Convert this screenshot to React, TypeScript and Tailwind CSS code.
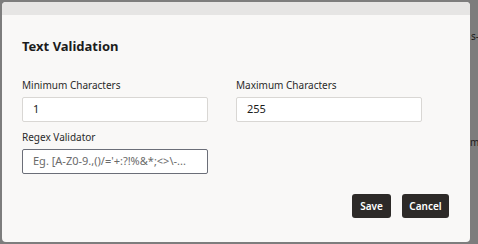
import React from "react";

export default function App() {
  return (
    <div
      className="relative w-[478px] h-[244px] bg-[#7d7d7d] pl-[2px] pt-[2px] overflow-hidden"
      style={{ fontFamily: '"Noto Sans", "Open Sans", sans-serif' }}
    >
      <div className="absolute left-[471px] top-[29px] text-[10px] text-[#1a1a1a]">s-</div>
      <div className="absolute left-[470px] top-[135px] text-[10px] text-[#1a1a1a] whitespace-nowrap">mp</div>
      <div className="relative w-[468px] h-[240px] bg-[#f9f8f7] rounded-[4px] flex flex-col overflow-hidden">
        <div className="h-[13px] bg-[#e6e5e4] shrink-0" />
        <div className="flex flex-col px-[20px]">
          <h2 className="mt-[22px] text-[13px] leading-[18px] font-bold text-[#1c1c1c]">Text Validation</h2>
          <div className="flex gap-[28px] mt-[23px]">
            <div className="flex flex-col w-[186px]">
              <label className="text-[10px] leading-[14px] text-[#2a2a2a]">Minimum Characters</label>
              <div className="mt-[5px] h-[25px] border border-[#d9d7d4] bg-white rounded-[2px] flex items-center px-[10px] text-[11px] text-[#1c1c1c]">1</div>
            </div>
            <div className="flex flex-col w-[186px]">
              <label className="text-[10px] leading-[14px] text-[#2a2a2a]">Maximum Characters</label>
              <div className="mt-[5px] h-[25px] border border-[#d9d7d4] bg-white rounded-[2px] flex items-center px-[10px] text-[11px] text-[#1c1c1c]">255</div>
            </div>
          </div>
          <div className="flex flex-col w-[186px] mt-[8px]">
            <label className="text-[10px] leading-[14px] text-[#2a2a2a]">Regex Validator</label>
            <div className="mt-[5px] h-[25px] border border-[#6b6e78] bg-white rounded-[2px] flex items-center px-[10px] text-[11px] text-[#6a6a6a] whitespace-nowrap overflow-hidden">
              Eg. [A-Z0-9.,()/='+:?!%&amp;*;&lt;&gt;\-...
            </div>
          </div>
          <div className="flex justify-end gap-[11px] mt-[20px] pr-[1px]">
            <button className="h-[24px] w-[39px] rounded-[3px] bg-[#2d2a28] text-white text-[10px] font-semibold">Save</button>
            <button className="h-[24px] w-[47px] rounded-[3px] bg-[#2d2a28] text-white text-[10px] font-semibold">Cancel</button>
          </div>
        </div>
      </div>
    </div>
  );
}
